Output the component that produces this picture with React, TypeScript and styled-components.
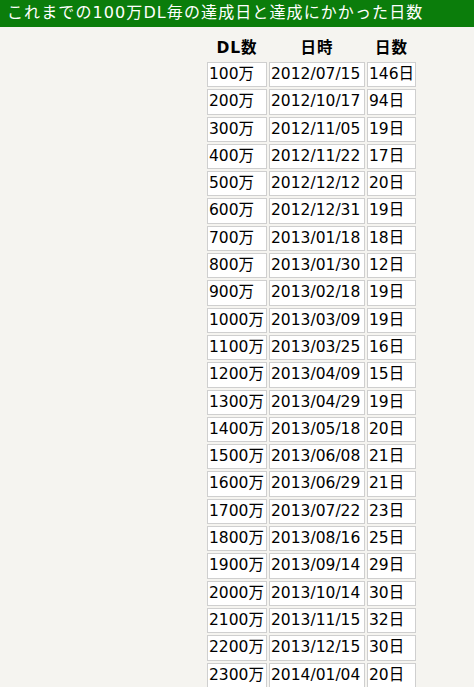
import React from 'react'
import styled, { createGlobalStyle } from 'styled-components'

const rows: [string, string, string][] = [
  ['100万', '2012/07/15', '146日'],
  ['200万', '2012/10/17', '94日'],
  ['300万', '2012/11/05', '19日'],
  ['400万', '2012/11/22', '17日'],
  ['500万', '2012/12/12', '20日'],
  ['600万', '2012/12/31', '19日'],
  ['700万', '2013/01/18', '18日'],
  ['800万', '2013/01/30', '12日'],
  ['900万', '2013/02/18', '19日'],
  ['1000万', '2013/03/09', '19日'],
  ['1100万', '2013/03/25', '16日'],
  ['1200万', '2013/04/09', '15日'],
  ['1300万', '2013/04/29', '19日'],
  ['1400万', '2013/05/18', '20日'],
  ['1500万', '2013/06/08', '21日'],
  ['1600万', '2013/06/29', '21日'],
  ['1700万', '2013/07/22', '23日'],
  ['1800万', '2013/08/16', '25日'],
  ['1900万', '2013/09/14', '29日'],
  ['2000万', '2013/10/14', '30日'],
  ['2100万', '2013/11/15', '32日'],
  ['2200万', '2013/12/15', '30日'],
  ['2300万', '2014/01/04', '20日'],
]

const GlobalStyle = createGlobalStyle`
  html, body {
    margin: 0;
    padding: 0;
    background: #f5f4f0;
  }
  body {
    font-family: "DejaVu Sans", "Noto Sans CJK JP", sans-serif;
    color: #000;
  }
`

const Page = styled.div`
  width: 474px;
  height: 687px;
  overflow: hidden;
`

const TitleBar = styled.h2`
  margin: 0;
  height: 27px;
  padding-left: 7px;
  background: #0b7d0b;
  color: #fff;
  font-size: 16px;
  font-weight: normal;
  line-height: 26px;
  letter-spacing: 1.1px;
  white-space: nowrap;
`

const Table = styled.table`
  margin: 6px 0 0 205px;
  border-collapse: separate;
  border-spacing: 2px 2px;
  font-size: 15.5px;
`

const HeadCell = styled.th`
  height: 25px;
  padding: 0 0 3px;
  box-sizing: border-box;
  font-weight: bold;
  text-align: center;
  letter-spacing: 1px;
  vertical-align: middle;
`

const Cell = styled.td<{ $w: number }>`
  width: ${p => p.$w}px;
  height: 25.3px;
  padding: 0 0 0 1px;
  box-sizing: border-box;
  background: #fff;
  border: 1px solid #cfcfcf;
  white-space: nowrap;
  line-height: 23.3px;
`

export default function App() {
  return (
    <Page>
      <GlobalStyle />
      <TitleBar>これまでの100万DL毎の達成日と達成にかかった日数</TitleBar>
      <Table>
        <thead>
          <tr>
            <HeadCell>DL数</HeadCell>
            <HeadCell>日時</HeadCell>
            <HeadCell>日数</HeadCell>
          </tr>
        </thead>
        <tbody>
          {rows.map(([dl, date, days]) => (
            <tr key={dl}>
              <Cell $w={60}>{dl}</Cell>
              <Cell $w={96}>{date}</Cell>
              <Cell $w={49}>{days}</Cell>
            </tr>
          ))}
        </tbody>
      </Table>
    </Page>
  )
}
